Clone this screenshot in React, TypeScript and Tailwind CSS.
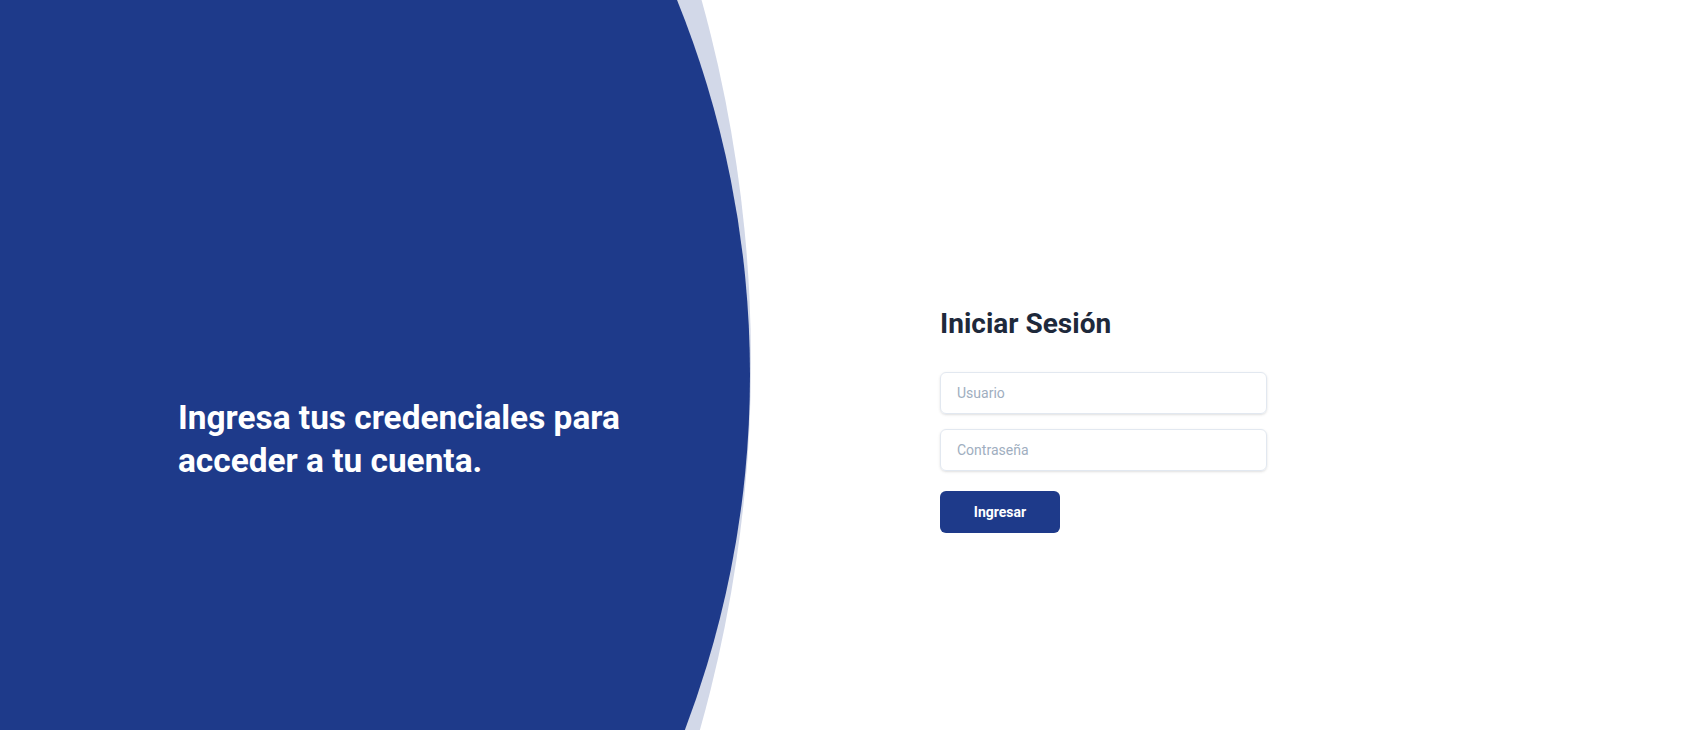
export default function App() {
  return (
    <div className="relative h-[730px] w-full overflow-hidden bg-white font-['Roboto',sans-serif]">
      {/* decorative circles */}
      <div className="pointer-events-none absolute left-[-1949px] top-[-988px] h-[2700px] w-[2700px] rounded-full bg-[#d2d8e8]" />
      <div className="pointer-events-none absolute left-[-1250px] top-[-625px] h-[2000px] w-[2000px] rounded-full bg-[#1e3a8a]" />

      <div className="relative flex h-full">
        <div className="w-[850px] shrink-0 pl-[178px] pt-[396px]">
          <p className="max-w-[500px] text-[33.4px] font-bold leading-[43px] text-white">
            Ingresa tus credenciales para acceder a tu cuenta.
          </p>
        </div>

        <div className="pl-[90px] pt-[306px]">
          <h1 className="text-[28px] font-bold leading-[36px] text-[#1e293b]">Iniciar Sesión</h1>
          <form className="mt-[30px] flex w-[327px] flex-col">
            <input
              type="text"
              placeholder="Usuario"
              className="h-[42px] rounded-md border border-[#e2e8f0] px-4 text-sm text-[#1e293b] shadow-sm outline-none placeholder:text-[#a0aec0]"
            />
            <input
              type="password"
              placeholder="Contraseña"
              className="mt-[15px] h-[42px] rounded-md border border-[#e2e8f0] px-4 text-sm text-[#1e293b] shadow-sm outline-none placeholder:text-[#a0aec0]"
            />
            <button
              type="button"
              className="mt-5 h-[42px] w-[120px] rounded-md bg-[#1e3a8a] text-sm font-bold text-white"
            >
              Ingresar
            </button>
          </form>
        </div>
      </div>
    </div>
  );
}
